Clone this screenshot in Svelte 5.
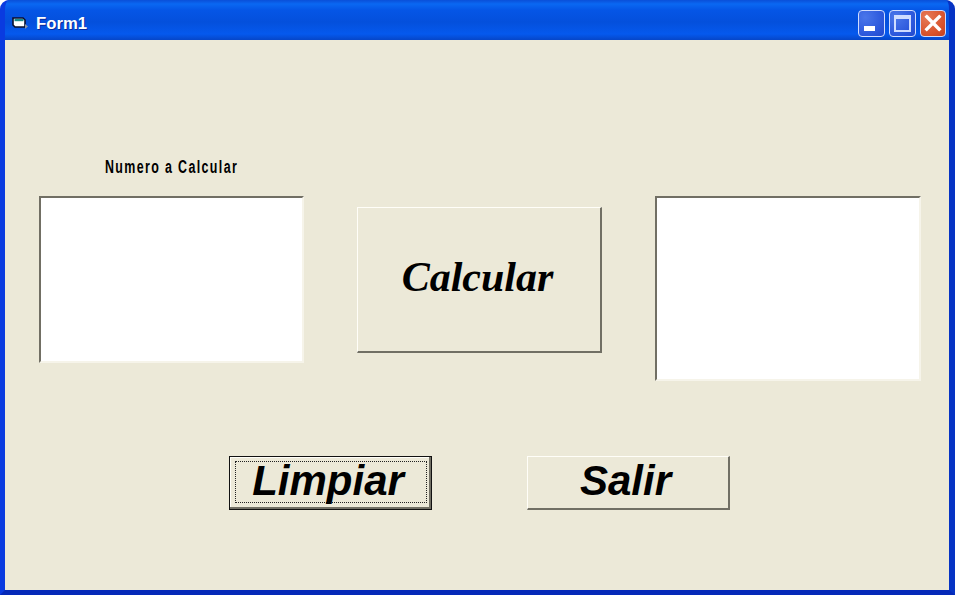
<script>
    let numero = $state("");
    let resultado = $state("");

    function limpiar() {
        numero = "";
        resultado = "";
    }
</script>

<div class="window">
    <div class="titlebar">
        <svg class="app-icon" viewBox="0 0 16 14" width="16" height="14">
            <path d="M1 2h10l2 2v7H3L1 9z" fill="#fff" stroke="#0a0f2c" stroke-width="1.6" />
            <rect x="2.5" y="3" width="9" height="2.2" fill="#1c8a8a" />
            <path d="M13 8l3 2.5-3 2.5z" fill="#8a94a8" />
        </svg>
        <span class="title">Form1</span>
        <div class="controls">
            <div class="ctl">
                <span class="min-glyph"></span>
            </div>
            <div class="ctl">
                <span class="max-glyph"></span>
            </div>
            <div class="ctl close">
                <svg viewBox="0 0 16 16" width="18" height="18">
                    <path d="M2.5 2.5l11 11M13.5 2.5l-11 11" stroke="#fff" stroke-width="3" stroke-linecap="square" />
                </svg>
            </div>
        </div>
    </div>

    <div class="form">
        <div class="label"><span>Numero a Calcular</span></div>
        <div class="top-row">
            <textarea class="box box-left" bind:value={numero}></textarea>
            <button class="btn btn-calc">Calcular</button>
            <textarea class="box box-right" bind:value={resultado}></textarea>
        </div>
        <div class="bottom-row">
            <button class="btn btn-big focused" onclick={limpiar}><span class="focus-ring">Limpiar</span></button>
            <button class="btn btn-big">Salir</button>
        </div>
    </div>
</div>

<style>
    :global(body) {
        margin: 0;
        background: #fff;
        overflow: hidden;
    }

    .window {
        width: 955px;
        height: 595px;
        box-sizing: border-box;
        display: flex;
        flex-direction: column;
        border-radius: 9px 9px 0 0;
        background: #0831d9;
        border-left: 5px solid #0a3be0;
        border-right: 6px solid #0633c4;
        border-bottom: 5px solid #0529b8;
        overflow: hidden;
    }

    .titlebar {
        height: 40px;
        flex: none;
        margin: 0 -6px 0 -5px;
        padding: 6px 9px 0 12px;
        display: flex;
        align-items: center;
        box-sizing: border-box;
        background: linear-gradient(180deg, #0a4fd8 0%, #0a68f2 10%, #0556e6 25%, #0450dc 55%, #0559ee 85%, #0646c8 100%);
    }

    .app-icon {
        flex: none;
        margin: 0 8px 0 0;
    }

    .title {
        margin-top: 2px;
        font-family: "Liberation Sans", Arial, sans-serif;
        font-weight: bold;
        font-size: 16.7px;
        color: #fff;
        text-shadow: 1px 1px 0 #0b2a9c;
    }

    .controls {
        margin-left: auto;
        display: flex;
        gap: 4px;
    }

    .ctl {
        width: 27px;
        height: 27px;
        box-sizing: border-box;
        border: 1px solid #cfdcff;
        border-radius: 4px;
        background: radial-gradient(circle at 25% 25%, #4a76ea, #2c58dc 65%, #2248cc);
        position: relative;
        display: flex;
        align-items: center;
        justify-content: center;
    }

    .close {
        width: 26px;
        background: radial-gradient(circle at 25% 25%, #e67a58, #d9532c 65%, #c24020);
    }

    .min-glyph {
        position: absolute;
        left: 5px;
        bottom: 5px;
        width: 11px;
        height: 5px;
        background: #fff;
    }

    .max-glyph {
        width: 17px;
        height: 17px;
        box-sizing: border-box;
        border: 2px solid #cfdcff;
        border-top-width: 4px;
    }

    .form {
        flex: 1;
        background: #ece9d8;
        padding: 0 0 0 34px;
        display: flex;
        flex-direction: column;
        min-height: 0;
    }

    .label {
        width: 265px;
        margin-top: 117px;
        height: 39px;
        line-height: 20px;
        text-align: center;
        font-family: "Liberation Sans", Arial, sans-serif;
        font-weight: bold;
        font-size: 18px;
        letter-spacing: 2px;
        color: #000;
    }

    .label span {
        display: inline-block;
        white-space: nowrap;
        transform: scaleX(0.69);
    }

    .top-row {
        display: flex;
        align-items: flex-start;
        gap: 53px;
        height: 260px;
    }

    .box {
        display: block;
        box-sizing: border-box;
        padding: 0;
        margin: 0;
        resize: none;
        outline: none;
        background: #fff;
        border-style: solid;
        border-width: 2px;
        border-color: #716f64 #f6f4ea #f6f4ea #716f64;
    }

    .box-left {
        width: 265px;
        height: 167px;
    }

    .box-right {
        width: 266px;
        height: 185px;
    }

    .btn {
        box-sizing: border-box;
        padding: 0;
        margin: 0;
        background: #ece9d8;
        color: #000;
        border-style: solid;
        border-width: 1px 2px 2px 1px;
        border-color: #fffef8 #716f64 #716f64 #fffef8;
    }

    .btn-calc {
        width: 245px;
        height: 146px;
        margin-top: 11px;
        padding: 0 3px 6px 0;
        font-family: "Liberation Serif", "Times New Roman", serif;
        font-weight: bold;
        font-style: italic;
        font-size: 42px;
    }

    .bottom-row {
        display: flex;
        gap: 95px;
        padding-left: 190px;
    }

    .btn-big {
        width: 203px;
        height: 54px;
        padding: 0 5px 3px 0;
        font-family: "Liberation Sans", Arial, sans-serif;
        font-weight: bold;
        font-style: italic;
        font-size: 42px;
        line-height: 46px;
    }

    .focused {
        border: 1px solid #111;
        box-shadow: inset -2px -2px 0 #716f64, inset 1px 1px 0 #fffef8;
        padding: 4px 4px 6px 5px;
    }

    .focus-ring {
        display: block;
        height: 100%;
        box-sizing: border-box;
        border: 1px dotted #222;
        line-height: 38px;
        padding-right: 6px;
    }
</style>
